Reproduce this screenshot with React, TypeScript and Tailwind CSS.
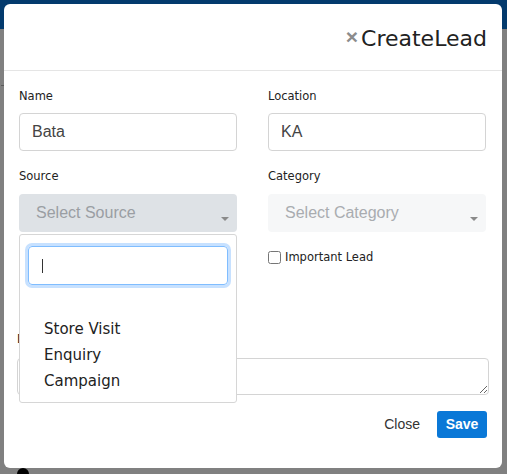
const comic = "font-['Comic_Sans_MS','DejaVu_Sans',sans-serif]";
const arial = "font-['Liberation_Sans',Arial,sans-serif]";

function Caret() {
  return (
    <span className="absolute right-[8px] top-[23px] h-0 w-0 border-x-[4px] border-t-[4px] border-x-transparent border-t-[#8a8a8a]" />
  );
}

export default function App() {
  const options = ["Store Visit", "Enquiry", "Campaign"];

  return (
    <div className="relative h-[474px] w-[507px] overflow-hidden bg-[#808080]">
      <div className="h-[29px] bg-[#033a6d]" />
      <div className="ml-[1px] mt-[56px] h-px w-[3px] bg-[#5a5a5a]" />
      <div className="absolute bottom-[-6px] left-[17px] h-[12px] w-[12px] rounded-full bg-black" />

      <div className="absolute left-[4px] top-[4px] flex h-[464px] w-[498px] flex-col rounded-[6px] bg-white">
        <div className="flex h-[67px] items-center justify-end border-b border-[#e5e5e5] pr-[15px] pt-[2px]">
          <span className={`${arial} mr-[3px] mt-[-4px] text-[21px] font-bold leading-none text-[#8c8c8c]`}>×</span>
          <h1 className={`${comic} text-[22px] text-[#222]`}>CreateLead</h1>
        </div>

        <div className="flex-1 px-[15px] pt-[16px]">
          <div className="grid grid-cols-[218px_218px] gap-x-[31px]">
            <div>
              <label className={`${comic} block text-[11.5px] leading-[18px] text-[#222]`}>Name</label>
              <div className={`${arial} mt-[8px] flex h-[38px] items-center rounded-[4px] border border-[#d4d4d4] px-[12px] text-[16px] text-[#444]`}>
                Bata
              </div>
            </div>
            <div>
              <label className={`${comic} block text-[11.5px] leading-[18px] text-[#222]`}>Location</label>
              <div className={`${arial} mt-[8px] flex h-[38px] items-center rounded-[4px] border border-[#d4d4d4] px-[12px] text-[16px] text-[#444]`}>
                KA
              </div>
            </div>

            <div className="mt-[16px]">
              <label className={`${comic} block text-[11.5px] leading-[18px] text-[#222]`}>Source</label>
              <div className="relative mt-[9px]">
                <div className={`${arial} relative flex h-[38px] items-center rounded-[4px] bg-[#dee2e6] pl-[17px] text-[16px] text-[#9a9ea3]`}>
                  Select Source
                  <Caret />
                </div>
                <div className="absolute left-0 top-[40px] z-10 h-[169px] w-[218px] rounded-[3px] border border-[#d6d6d6] bg-white">
                  <div className="mx-[8px] mt-[11px] flex h-[39px] items-center rounded-[4px] border border-[#80bdff] pl-[13px] shadow-[0_0_0_3px_#c7e1ff]">
                    <span className="h-[14px] w-px bg-[#333]" />
                  </div>
                  <ul className={`${comic} mt-[31px] pl-[24px] text-[15px] leading-[26px] text-[#222]`}>
                    {options.map((o) => (
                      <li key={o}>{o}</li>
                    ))}
                  </ul>
                </div>
              </div>
            </div>

            <div className="mt-[16px]">
              <label className={`${comic} block text-[11.5px] leading-[18px] text-[#222]`}>Category</label>
              <div className={`${arial} relative mt-[9px] flex h-[38px] items-center rounded-[4px] bg-[#f6f7f8] pl-[17px] text-[16px] text-[#a9acb0]`}>
                Select Category
                <Caret />
              </div>
              <label className={`${comic} mt-[17px] flex items-center gap-[4px] text-[11.5px] leading-[16px] text-[#222]`}>
                <input type="checkbox" className="m-0 h-[13px] w-[13px]" />
                Important Lead
              </label>
            </div>
          </div>

          <div className="-mx-[2px] mt-[65px]">
            <label className={`${comic} block text-[11.5px] leading-[18px] text-[#222]`}>Description</label>
            <textarea className="mt-[10px] block h-[37px] w-full rounded-[4px] border border-[#d4d4d4]" />
          </div>
        </div>

        <div className="flex items-center justify-end gap-[17px] px-[15px] pb-[30px]">
          <button className={`${arial} text-[14px] text-[#333]`}>Close</button>
          <button className={`${arial} h-[27px] w-[50px] rounded-[3px] bg-[#0a78d7] text-[14px] font-semibold text-white`}>
            Save
          </button>
        </div>
      </div>
    </div>
  );
}
